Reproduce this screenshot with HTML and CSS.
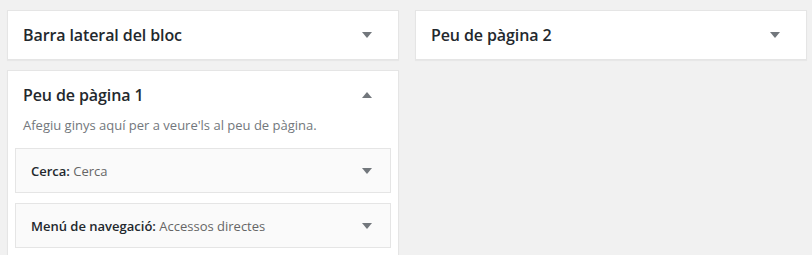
FILE: index.html
```html
<!DOCTYPE html>
<html>
<head>
    <title>Ginys</title>
    <link rel="stylesheet" href="styles.css">
</head>
<body>
    <div class="columns">
        <div class="column">
            <div class="sidebar">
                <div class="sidebar-name">
                    <h2>Barra lateral del bloc</h2>
                    <span class="arrow down"></span>
                </div>
            </div>
            <div class="sidebar open">
                <div class="sidebar-name">
                    <h2>Peu de pàgina 1</h2>
                    <span class="arrow up"></span>
                </div>
                <p class="description">Afegiu ginys aquí per a veure'ls al peu de pàgina.</p>
                <div class="widgets">
                    <div class="widget">
                        <div class="widget-title"><b>Cerca:</b> <span>Cerca</span></div>
                        <span class="arrow down"></span>
                    </div>
                    <div class="widget">
                        <div class="widget-title"><b>Menú de navegació:</b> <span>Accessos directes</span></div>
                        <span class="arrow down"></span>
                    </div>
                </div>
            </div>
        </div>
        <div class="column">
            <div class="sidebar">
                <div class="sidebar-name">
                    <h2>Peu de pàgina 2</h2>
                    <span class="arrow down"></span>
                </div>
            </div>
        </div>
    </div>
</body>
</html>
```

FILE: styles.css
```css
body {
    margin: 0;
    background-color: #f1f1f1;
    font-family: "Open Sans", "Noto Sans", sans-serif;
    color: #23282d;
}

.columns {
    display: flex;
    gap: 16px;
    padding: 10px 5px 0 7px;
}

.column {
    width: 392px;
}

.sidebar {
    background-color: #fff;
    border: 1px solid #e5e5e5;
    box-shadow: 0 1px 1px rgba(0, 0, 0, 0.04);
    margin-bottom: 10px;
}

.sidebar-name {
    display: flex;
    align-items: center;
    justify-content: space-between;
    padding: 14px 26px 14px 15px;
}

.sidebar.open .sidebar-name {
    padding-bottom: 0;
}

.sidebar-name h2 {
    margin: 0;
    font-size: 16px;
    font-weight: 600;
    line-height: 20px;
    letter-spacing: -0.1px;
}

.arrow {
    width: 0;
    height: 0;
    border-left: 5px solid transparent;
    border-right: 5px solid transparent;
}

.arrow.down {
    border-top: 6px solid #72777c;
}

.arrow.up {
    border-bottom: 6px solid #72777c;
}

.description {
    margin: 0;
    padding: 10px 15px 0;
    font-size: 13px;
    line-height: 20px;
    color: #72777c;
}

.widgets {
    padding: 13px 7px 0;
}

.widget {
    display: flex;
    align-items: center;
    justify-content: space-between;
    height: 43px;
    padding: 0 18px 0 15px;
    margin-bottom: 10px;
    background-color: #fafafa;
    border: 1px solid #e5e5e5;
    font-size: 13px;
}

.widget-title b {
    font-weight: 600;
    color: #23282d;
}

.widget-title span {
    color: #666;
}
```
